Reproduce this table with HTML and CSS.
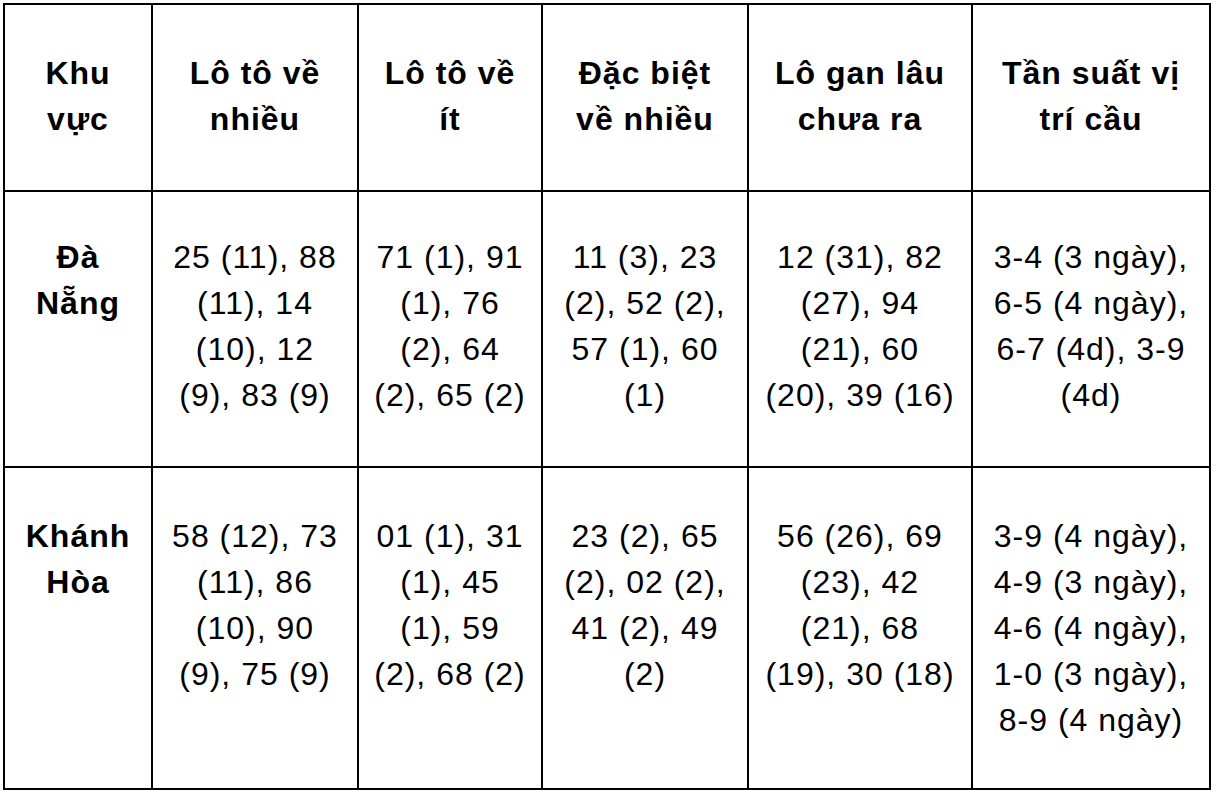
FILE: index.html
```html
<!DOCTYPE html>
<html lang="vi">
<head>
<meta charset="utf-8">
<title>Thống kê xổ số</title>
<link rel="stylesheet" href="styles.css">
</head>
<body>
<table class="stats">
  <colgroup>
    <col class="c1"><col class="c2"><col class="c3"><col class="c4"><col class="c5"><col class="c6">
  </colgroup>
  <tr class="head">
    <th>Khu vực</th>
    <th>Lô tô về nhiều</th>
    <th>Lô tô về ít</th>
    <th>Đặc biệt về nhiều</th>
    <th>Lô gan lâu chưa ra</th>
    <th>Tần suất vị trí cầu</th>
  </tr>
  <tr class="r1">
    <th>Đà Nẵng</th>
    <td>25 (11), 88 (11), 14 (10), 12 (9), 83 (9)</td>
    <td>71 (1), 91 (1), 76 (2), 64 (2), 65 (2)</td>
    <td>11 (3), 23 (2), 52 (2), 57 (1), 60 (1)</td>
    <td>12 (31), 82 (27), 94 (21), 60 (20), 39 (16)</td>
    <td>3-4 (3 ngày), 6-5 (4 ngày), 6-7 (4d), 3-9 (4d)</td>
  </tr>
  <tr class="r2">
    <th>Khánh Hòa</th>
    <td>58 (12), 73 (11), 86 (10), 90 (9), 75 (9)</td>
    <td>01 (1), 31 (1), 45 (1), 59 (2), 68 (2)</td>
    <td>23 (2), 65 (2), 02 (2), 41 (2), 49 (2)</td>
    <td>56 (26), 69 (23), 42 (21), 68 (19), 30 (18)</td>
    <td>3-9 (4 ngày), 4-9 (3 ngày), 4-6 (4 ngày), 1-0 (3 ngày), 8-9 (4 ngày)</td>
  </tr>
</table>
</body>
</html>
```
FILE: styles.css
```css
html, body {
  margin: 0;
  padding: 0;
  background: #ffffff;
}
body {
  padding: 3px;
  font-family: "Liberation Sans", Arial, sans-serif;
  color: #000000;
}
.stats {
  border-collapse: collapse;
  table-layout: fixed;
  width: 1206px;
}
.c1 { width: 148px; }
.c2 { width: 206px; }
.c3 { width: 184px; }
.c4 { width: 206px; }
.c5 { width: 224px; }
.c6 { width: 238px; }
.stats th,
.stats td {
  border: 2px solid #000000;
  font-size: 32px;
  line-height: 46px;
  letter-spacing: 1px;
  text-align: center;
  vertical-align: top;
  padding: 45px 14px;
  box-sizing: border-box;
}
.stats th { font-weight: bold; }
.stats td { font-weight: normal; }
.head th { height: 187px; padding-top: 45px; }
.r1 th, .r1 td { height: 276px; padding-top: 42px; }
.r2 th, .r2 td { height: 322px; }
```
